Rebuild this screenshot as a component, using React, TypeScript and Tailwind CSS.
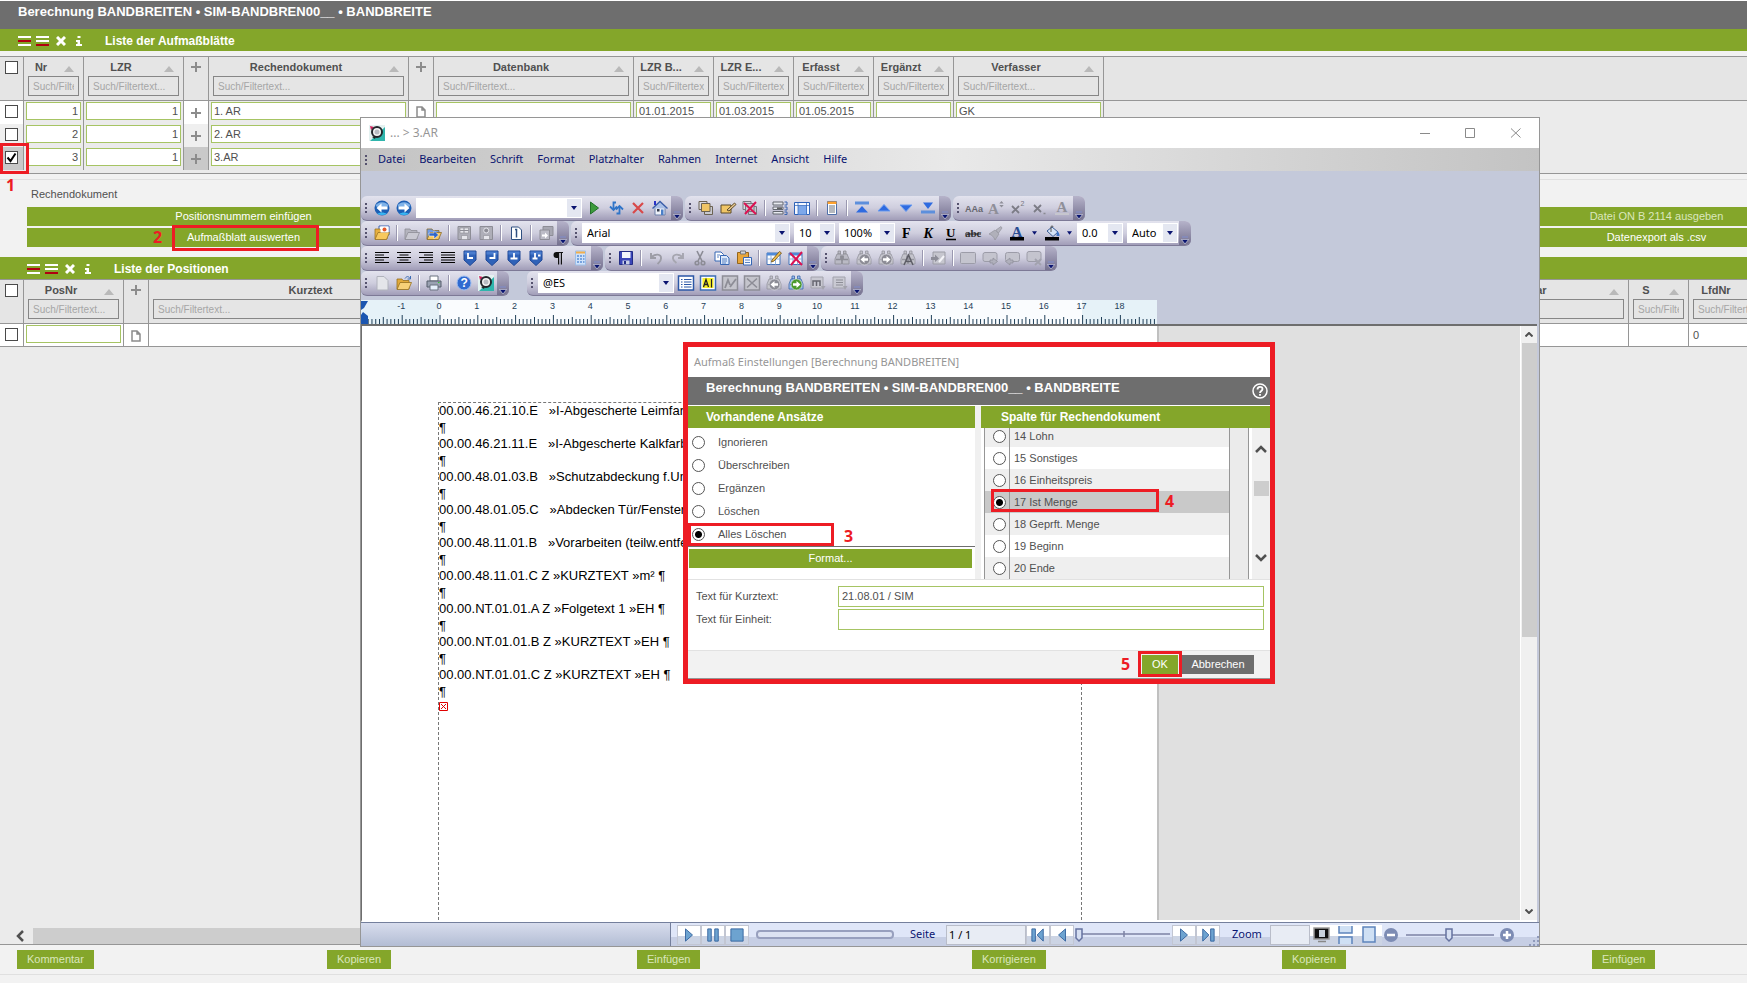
import React, { useState } from "react";

const ui_font = "font-['Noto_Sans','Open_Sans',sans-serif]";

const gray = "#8f8f99";
const gray_light = "#c6c6ce";

const binoculars = (color: string, light: string) => (
  <g stroke={color} strokeWidth="0.8" fill={light}>
    <path d="M4 1h2.500v3H4zM9.500 1H12v3H9.500z" />
    <path d="M3 4h4l.5 4v6H1V9zM9 4h4l2 5v5H8.500V8z" />
    <path d="M6.500 6h3v4h-3z" fill={color} />
    <path d="M2 9.500h4M10 9.500h4" stroke={color} strokeWidth="1.500" />
  </g>
);

const shield = (inner: string) => (
  <>
    <path d="M2 1h12v9l-6 5.500L2 10z" fill="#2f62b8" stroke="#1f4796" />
    <path d="M2.500 1.500h11v3h-11z" fill="#4a7cce" />
    <path d={inner} stroke="#fff" strokeWidth="1.800" fill="none" />
  </>
);

const folder = (front: string, back: string, edge: string) => (
  <>
    <path d="M1 14V4h5l1 1.500h6V14z" fill={back} stroke={edge} strokeWidth="0.8" />
    <path d="M1 14.500l3-7h11.500l-3 7z" fill={front} stroke={edge} strokeWidth="0.8" />
  </>
);

const sheets = (color: string, edge: string) => (
  <>
    <path d="M1 1.500h8v8H1z" fill="#d8d8e0" stroke={edge} />
    <path d="M6.500 6.500h8v8h-8z" fill="#c8c8d0" stroke={edge} />
    <path d="M3.500 3.500h8.500v8H3.500z" fill={color} stroke={edge} />
  </>
);

const circle_arrow = (d: string, fill: string) => (
  <>
    <circle cx="8.500" cy="9.500" r="5.500" fill={fill} stroke="#e8e8ee" strokeWidth="0.6" />
    <path d={d} fill="#fff" />
  </>
);

const left_head = "M4.500 9.500L8.500 6v2.200H12v2.600H8.500V13z";
const right_head = "M12.500 9.500L8.500 6v2.200H5v2.600h3.500V13z";

const logo = (
  <>
    <path d="M0 0h16v16H0z" fill="#e4f2f1" />
    <path d="M16 2v14H1z" fill="#2fb5ac" />
    <path d="M1 1l4 1-3 3z" fill="#d21f5b" />
    <circle cx="8" cy="7" r="5" fill="#f4f4f4" stroke="#23262b" strokeWidth="2" />
    <circle cx="8" cy="7" r="2.500" fill="#b9bcc2" />
    <path d="M3 12l4-1-1 3z" fill="#222" />
  </>
);

const icons: Record<string, React.ReactNode> = {
  back: (
    <>
      <circle cx="8" cy="8" r="7.500" fill="#1d5fb4" />
      <path d="M1.500 6a7 6 0 0 1 13 0c-4 2-9 2-13 0z" fill="#7fb2e8" />
      <path d="M3 14a8 4 0 0 0 10 0c-3-2-7-2-10 0z" fill="#38b6f2" />
      <path d="M2.500 8l5-4.500v3h6v3h-6v3z" fill="#fff" />
    </>
  ),
  forward: (
    <>
      <circle cx="8" cy="8" r="7.500" fill="#1d5fb4" />
      <path d="M1.500 6a7 6 0 0 1 13 0c-4 2-9 2-13 0z" fill="#7fb2e8" />
      <path d="M3 14a8 4 0 0 0 10 0c-3-2-7-2-10 0z" fill="#38b6f2" />
      <path d="M13.500 8l-5-4.500v3h-6v3h6v3z" fill="#fff" />
    </>
  ),
  play: <path d="M4.500 2l8 6-8 6z" fill="#3c9a3c" stroke="#23702a" />,
  refresh: (
    <g fill="none" stroke="#2f74c8" strokeWidth="1.800">
      <path d="M8 2.500H5.500v7" />
      <path d="M2 6.500l3.500 3.500L9 6.500" />
      <path d="M8.500 13.500h3v-7" />
      <path d="M8 9.500L11.500 6 15 9.500" />
    </g>
  ),
  stop: <path d="M3 3l10 10M13 3L3 13" stroke="#d8494a" strokeWidth="2.200" />,
  home: (
    <>
      <path d="M3 7h10v8H3z" fill="#eef1f8" stroke="#6a7fa8" />
      <path d="M0.500 8.500L8 1.500l7.500 7" fill="#a9bfe6" stroke="#3b5ea8" strokeWidth="1.400" />
      <path d="M2 1h2v4H2z" fill="#2a33c8" />
      <path d="M5 9h2.500v2.500H5z" fill="#333a4a" />
      <path d="M9 9.500h2.500V15H9z" fill="#4a7fc8" />
    </>
  ),
  layers: sheets("#f0c566", "#6b6252"),
  layer_edit: (
    <>
      <path d="M1 5h10v8H1z" fill="#f0c566" stroke="#5c4b28" />
      <path d="M7 10l7.500-7 1.500 1.500L9 11z" fill="#e8c890" stroke="#5c4b28" />
    </>
  ),
  layer_delete: (
    <>
      {sheets("#c9c9d2", "#77777f")}
      <path d="M2 3l12 11M14 2L3 14" stroke="#dc1252" strokeWidth="2" />
    </>
  ),
  fields: (
    <>
      <path d="M1 2h10v3H1zM1 7h10v2.500H1zM1 11.500h10V14H1z" fill="#e8eaf0" stroke="#62666e" />
      <path d="M5 8.200h5" stroke="#222" />
      <path d="M12.500 2H15v3h-2.500M12.500 7H15v3h-2.500M12.500 12H15v2.500h-2.500" fill="none" stroke="#3a65b0" />
    </>
  ),
  frame: (
    <>
      <path d="M0.500 2.500h15v12h-15z" fill="#f4f8ff" stroke="#2d62b8" />
      <path d="M4 5.500h9v9H4z" fill="#7da8ea" />
      <path d="M0.500 5.500h15M4 2v12.500M12.500 2v12.500" stroke="#2d62b8" strokeWidth="0.7" />
    </>
  ),
  report: (
    <>
      <path d="M3.500 1.500h9v13h-9z" fill="#fff" stroke="#4f6fa8" />
      <path d="M3.500 1.500h9v2.500h-9z" fill="#ffa22e" />
      <path d="M5 6h6M5 8h6M5 10h6M5 12h6" stroke="#6a727f" />
    </>
  ),
  to_top: (
    <>
      <path d="M1 1.500h14v3H1z" fill="#5d8fdc" />
      <path d="M8 6l6 6.500H2z" fill="#2f6be0" />
    </>
  ),
  up: <path d="M8 4.500l6 6.500H2z" fill="#2f6be0" stroke="#6a9cf0" />,
  down: <path d="M8 11.500L2 5h12z" fill="#2f6be0" stroke="#6a9cf0" />,
  to_bottom: (
    <>
      <path d="M8 9L3 2.500h10z" fill="#2f6be0" />
      <path d="M1 10.500h14v3H1z" fill="#5d8fdc" />
    </>
  ),
  char_size: (
    <text x="-1" y="12" fontSize="9" fontWeight="700" fontFamily="Liberation Sans" fill="#66666e">
      AAa
    </text>
  ),
  font_grow: (
    <>
      <text x="0" y="14" fontSize="15" fontWeight="700" fontFamily="Liberation Serif" fill={gray}>
        A
      </text>
      <path d="M13.500 1l2.200 2.500h-4.400zM13.500 7.500l2.200-2.500h-4.400z" fill={gray} />
    </>
  ),
  superscript: (
    <>
      <path d="M2 6l7 7M9 6l-7 7" stroke="#7c7c86" strokeWidth="1.800" />
      <text x="10.500" y="6" fontSize="7" fontFamily="Liberation Sans" fill="#77777f">
        2
      </text>
    </>
  ),
  subscript: (
    <>
      <path d="M2 5l7 7M9 5l-7 7" stroke="#7c7c86" strokeWidth="1.800" />
      <path d="M11.500 13.500h2" stroke="#8a8a92" strokeWidth="1.500" />
    </>
  ),
  font_color_off: (
    <>
      <text x="2.500" y="12" fontSize="15" fontWeight="700" fontFamily="Liberation Serif" fill={gray}>
        A
      </text>
      <path d="M1 13h14v2H1z" fill={gray_light} />
    </>
  ),
  open_image: (
    <>
      <path d="M5 1h10v9H5z" fill="#fff" stroke="#3d63b4" />
      {folder("#f7c85e", "#e8b040", "#9a7424")}
      <path d="M6.500 1.500h8v6h-8z" fill="#fff" />
      <circle cx="10.500" cy="4.500" r="2" fill="#e4572a" />
    </>
  ),
  folder_off: folder("#c9c9d2", "#b4b4be", "#8d8d96"),
  folder_go: (
    <>
      {folder("#f7c85e", "#6f9be6", "#8a6c2c")}
      <path d="M3 8h5V5.500L12.500 10 8 14v-3H3z" fill="#2f66c8" stroke="#fff" strokeWidth="0.5" />
    </>
  ),
  save_grid_off: (
    <>
      <path d="M2 1.500h12.500v13H2z" fill="#aeaeb8" stroke="#8d8d96" />
      <path d="M4 3h8.500v5H4zM5.500 10.500h6v4h-6z" fill="#e6e6ec" stroke="#8d8d96" strokeWidth="0.6" />
      <path d="M8 3v5M4 5.500h8.500" stroke="#8d8d96" />
    </>
  ),
  save_img_off: (
    <>
      <path d="M2 1.500h12.500v13H2z" fill="#aeaeb8" stroke="#8d8d96" />
      <path d="M5.500 10.500h6v4h-6z" fill="#e6e6ec" stroke="#8d8d96" strokeWidth="0.6" />
      <circle cx="8.200" cy="5.500" r="2.500" fill="#8d8d96" stroke="#e6e6ec" />
    </>
  ),
  page_split: (
    <>
      <path d="M3.500 2h7l3 3v9.500h-10z" fill="#fff" stroke="#2f4f80" />
      <path d="M7 4.500h1.500v8" fill="none" stroke="#2f4f80" strokeWidth="1.500" />
    </>
  ),
  export_off: (
    <>
      <path d="M5 1.500h10v9H5z" fill="#a7a7b2" stroke="#8d8d96" />
      <path d="M2 5h9.500v9.500H2z" fill="#bcbcc6" stroke="#8d8d96" />
      <path d="M4 9.500h3v-2l3 3-3 3v-2H4z" fill="#fff" />
    </>
  ),
  bold: (
    <text x="3" y="13" fontSize="14" fontWeight="700" fontFamily="Liberation Serif" fill="#000">
      F
    </text>
  ),
  italic: (
    <text x="2.500" y="13" fontSize="14" fontWeight="700" fontStyle="italic" fontFamily="Liberation Serif" fill="#000">
      K
    </text>
  ),
  underline: (
    <>
      <text x="3" y="12" fontSize="13" fontWeight="700" fontFamily="Liberation Serif" fill="#000">
        U
      </text>
      <path d="M3 14.500h10" stroke="#000" strokeWidth="1.300" />
    </>
  ),
  strike: (
    <>
      <text x="0" y="12" fontSize="11" fontWeight="700" fontFamily="Liberation Serif" fill="#333">
        abc
      </text>
      <path d="M0 9h16" stroke="#222" />
    </>
  ),
  brush: (
    <>
      <path d="M9 5l5-3.500 1 1.500-3.500 5z" fill="#b4b4be" stroke="#8d8d96" strokeWidth="0.6" />
      <path d="M2 9l6-4 4 4-4 6c-1-3-3-5-6-6z" fill="#b0b0ba" stroke="#8d8d96" strokeWidth="0.6" />
    </>
  ),
  font_color: (
    <>
      <text x="2.500" y="11.500" fontSize="15" fontWeight="700" fontFamily="Liberation Serif" fill="#2a4d92">
        A
      </text>
      <path d="M1 12h14v3.500H1z" fill="#000" />
    </>
  ),
  fill_color: (
    <>
      <path d="M3 6l5-4 6 5-5 4.500z" fill="#d5e2f5" stroke="#3b5d94" />
      <path d="M7 7V2c0-1.500 2-1.500 2 0" fill="none" stroke="#555" />
      <path d="M13 6c2 1 2.500 3 2.500 5h-3z" fill="#3f73c4" />
      <path d="M1 12h14v3.500H1z" fill="#000" />
    </>
  ),
  align_left: <path d="M1 2.500h14M1 5h9M1 7.500h14M1 10h9M1 12.500h14" stroke="#000" strokeWidth="1.200" />,
  align_center: <path d="M1 2.500h14M3.500 5h9M1 7.500h14M3.500 10h9M1 12.500h14" stroke="#000" strokeWidth="1.200" />,
  align_right: <path d="M1 2.500h14M6 5h9M1 7.500h14M6 10h9M1 12.500h14" stroke="#000" strokeWidth="1.200" />,
  align_full: <path d="M1 2.500h14M1 5h14M1 7.500h14M1 10h14M1 12.500h14" stroke="#000" strokeWidth="1.200" />,
  tab_left: shield("M6 3v5h5"),
  tab_right: shield("M10.500 3v5h-5"),
  tab_center: shield("M8 3v5.500M4.500 8.500h7"),
  tab_decimal: shield("M7 3v5.500M4.500 8.500h5M10 5.500h2.500"),
  pilcrow: (
    <>
      <path d="M9 2H6.500a3 3 0 0 0 0 6H8v6.500h1.200V3h1.600v11.500H12V3h1V2z" fill="#111" />
    </>
  ),
  calc: (
    <>
      <path d="M3.500 1h10v14h-10z" fill="#cfe2fa" stroke="#9cbfe8" />
      <path d="M4 1.500h9v2H4z" fill="#f3ae4a" />
      <path d="M5 6h2M8 6h2M11 6h1.500M5 9h2M8 9h2M11 9h1.500M5 12h2M8 12h2M11 12h1.500" stroke="#5b8fd6" strokeWidth="1.600" />
    </>
  ),
  save: (
    <>
      <path d="M1.500 1.500h13v13h-13z" fill="#3a45b8" stroke="#232c86" />
      <path d="M4 2h8.500v6H4z" fill="#f2f5fc" />
      <path d="M4.500 10.500h7v4h-7z" fill="#c9d1e6" />
      <path d="M6 11h2v3H6z" fill="#232c86" />
    </>
  ),
  undo: <path d="M3 3v5h5M3.500 7.500c3-4 10-4 9.500 1 0 3-2 4-3.500 5.500" fill="none" stroke="#9c9ca6" strokeWidth="1.900" />,
  redo: <path d="M13 3v5H8M12.500 7.500c-3-4-10-4-9.500 1 0 2 1.500 3 3.500 4.500" fill="none" stroke="#a6a6b0" strokeWidth="1.900" />,
  cut: (
    <g stroke="#8c8c96" fill="none" strokeWidth="1.600">
      <path d="M5 1l5 10M11 1L6 11" />
      <circle cx="5" cy="13" r="1.800" />
      <circle cx="11" cy="13" r="1.800" />
    </g>
  ),
  copy: (
    <>
      <path d="M1 2h6l2.500 2.500V11H1z" fill="#fff" stroke="#3566b4" />
      <path d="M6.500 5.500h6L15 8v6.500H6.500z" fill="#dce9fb" stroke="#3566b4" />
      <path d="M8 9h5M8 11h5M8 13h4M3 5h3M3 7h2" stroke="#3566b4" strokeWidth="0.8" />
    </>
  ),
  paste: (
    <>
      <path d="M1.500 2.500h11v11h-11z" fill="#e8a63a" stroke="#94651d" />
      <path d="M4.500 1h5v3h-5z" fill="#d3d6dc" stroke="#777" />
      <path d="M7.500 7.500h8V15h-8z" fill="#f5f8fe" stroke="#3566b4" />
      <path d="M9 10h5M9 12.500h5" stroke="#3566b4" strokeWidth="0.8" />
    </>
  ),
  table_edit: (
    <>
      <path d="M1 3h13v11.500H1z" fill="#fff" stroke="#4372b8" />
      <path d="M1 3h13v2.500H1z" fill="#4f8ad8" />
      <path d="M1 9h13M5 5v9.500M9.500 5v9.500" stroke="#8fb0de" />
      <path d="M6 10l7.500-8.500L15.500 3 8 11l-2.500 1z" fill="#f0c050" stroke="#6b4a12" strokeWidth="0.8" />
    </>
  ),
  table_delete: (
    <>
      <path d="M1 3h13v11.500H1z" fill="#fff" stroke="#4372b8" />
      <path d="M1 3h13v2.500H1z" fill="#4f8ad8" />
      <path d="M1 9h13M5 5v9.500M9.500 5v9.500" stroke="#8fb0de" />
      <path d="M2 3l12 12M14 2L3 15" stroke="#dc1252" strokeWidth="2" />
    </>
  ),
  find: binoculars("#8d8d96", "#babac4"),
  find_prev: (
    <>
      {binoculars("#9696a0", "#c4c4cc")}
      {circle_arrow(left_head, "#8d8d96")}
    </>
  ),
  find_next: (
    <>
      {binoculars("#9696a0", "#c4c4cc")}
      {circle_arrow(right_head, "#8d8d96")}
    </>
  ),
  find_next_on: (
    <>
      {binoculars("#3b68a8", "#9dc0ee")}
      {circle_arrow(right_head, "#4b9a2c")}
    </>
  ),
  find_text: (
    <>
      {binoculars("#9696a0", "#c4c4cc")}
      <path d="M4 15l4.500-10L13 15M5.500 11.500h6" stroke="#5d5d66" strokeWidth="1.500" fill="none" />
    </>
  ),
  note_go: (
    <>
      <path d="M3 2h12v12H3z" fill="#c6c6ce" stroke="#9c9ca6" />
      <path d="M1 7h4V4.500L9 8.500 5 12V10H1z" fill="#8d8d98" />
      <path d="M9 12l5-6" stroke="#f4f4f8" strokeWidth="2" />
    </>
  ),
  box: <rect x="0.500" y="2.500" width="15" height="11" rx="1" fill="#c4c4ce" stroke="#9c9ca8" />,
  box_next: (
    <>
      <rect x="1" y="2.500" width="14" height="9" rx="2" fill="#c4c4ce" stroke="#9c9ca8" />
      <path d="M8 10h3V8l4.500 3.500L11 15v-2H8z" fill="#b0b0bc" stroke="#8d8d98" strokeWidth="0.7" />
    </>
  ),
  box_prev: (
    <>
      <rect x="1.500" y="2.500" width="14" height="9" rx="2" fill="#c4c4ce" stroke="#9c9ca8" />
      <path d="M9 10H6V8l-4.500 3.500L6 15v-2h3z" fill="#b0b0bc" stroke="#8d8d98" strokeWidth="0.7" />
    </>
  ),
  box_delete: (
    <>
      <rect x="1" y="1.500" width="14" height="10" rx="2" fill="#c4c4ce" stroke="#9c9ca8" />
      <path d="M9 9l6 6M15 9l-6 6" stroke="#a2a2ae" strokeWidth="1.800" />
    </>
  ),
  new_page: <path d="M3 1.500h7l4 4v9.500H3z" fill="#e4e5ea" stroke="#b0b2bc" />,
  open: (
    <>
      {folder("#f7d078", "#e2a93a", "#94701f")}
      <path d="M9 3.500c2-3 4-2 5 0M14.500 1v3h-3" stroke="#3c6cb4" fill="none" />
    </>
  ),
  print: (
    <>
      <path d="M4 1h8v5H4z" fill="#fff" stroke="#6b7280" />
      <path d="M1 6h14v6H1z" fill="#9aa2b2" stroke="#555c6b" />
      <path d="M4 10h8v5H4z" fill="#e6f0fb" stroke="#6b7280" />
      <path d="M12 7.500h1.500" stroke="#3c3" />
    </>
  ),
  help: (
    <>
      <circle cx="8" cy="8" r="7" fill="#2f6ad0" stroke="#9dbdf0" />
      <text x="4.500" y="12.300" fontSize="12" fontWeight="700" fontFamily="Liberation Sans" fill="#fff">
        ?
      </text>
    </>
  ),
  logo: logo,
  list: (
    <>
      <path d="M0.500 1h15v14h-15z" fill="#fff" stroke="#2b57a6" strokeWidth="1.500" />
      <path d="M3 4.500h1.500M3 7h1.500M3 9.500h1.500M3 12h1.500M6 4.500h7.500M6 7h7.500M6 9.500h7.500M6 12h7.500" stroke="#2b57a6" />
    </>
  ),
  text_mark: (
    <>
      <path d="M0.500 1h15v14h-15z" fill="#fff" stroke="#3d6db4" strokeWidth="1.500" />
      <path d="M2.500 3h11v10h-11z" fill="#f6f02a" />
      <path d="M3.500 12l2.500-7.500L8.500 12M4.500 9.500h3" fill="none" stroke="#222" strokeWidth="1.300" />
      <path d="M11.500 4v8.500" stroke="#222" strokeWidth="1.200" />
    </>
  ),
  mark_edit_off: (
    <>
      <path d="M0.500 1h15v14h-15z" fill="#c4c4cc" stroke="#8d8d96" strokeWidth="1.500" />
      <path d="M3 13l3-8 2 5M8 12l6-8" fill="none" stroke="#8d8d96" strokeWidth="1.800" />
    </>
  ),
  mark_delete_off: (
    <>
      <path d="M0.500 1h15v14h-15z" fill="#c4c4cc" stroke="#8d8d96" strokeWidth="1.500" />
      <path d="M3 3.500l10 9M13 3.500l-10 9" stroke="#8d8d96" strokeWidth="1.600" />
    </>
  ),
  macro_off: (
    <>
      <path d="M1 2h12v11H1z" fill="#c9c9d2" stroke="#a2a2ac" />
      <path d="M3 11V6h7v5M6.500 6v5" fill="none" stroke="#666670" strokeWidth="1.500" />
      <path d="M11 11h4.500L13 15z" fill="#a2a2ac" />
    </>
  ),
  list_off: (
    <>
      <path d="M1 2h12v11H1z" fill="#c9c9d2" stroke="#a2a2ac" />
      <path d="M4 5h7M4 7.500h7M4 10h7" stroke="#8d8d96" />
      <path d="M11 11h4.500L13 15z" fill="#a2a2ac" />
    </>
  ),
};

const Icon = ({ name }: { name: string }) => (
  <button type="button" aria-label={name} className="flex h-6 w-[22px] items-center justify-center">
    <svg viewBox="0 0 16 16" className="h-4 w-4 overflow-visible">
      {icons[name]}
    </svg>
  </button>
);

const Sep = () => (
  <span className="flex w-2 justify-center">
    <span className="h-4 w-[2px] border-r border-white bg-[#9a98b0]" />
  </span>
);

// "|" in a list of names stands for a separator
const IconList = ({ names }: { names: string }) => (
  <>
    {names.split(" ").map((n, i) => (n === "|" ? <Sep key={i} /> : <Icon key={i} name={n} />))}
  </>
);

const Bar = ({ children }: { children: React.ReactNode }) => (
  <div className="flex h-[25px] items-center overflow-hidden rounded-md border-b border-[#7d7996] bg-linear-to-b from-[#e3e3ee] via-[#cfcede] to-[#a19db8]">
    <span className="flex w-[10px] flex-col items-center gap-[2px]">
      <i className="h-[2px] w-[2px] bg-[#55526e]" />
      <i className="h-[2px] w-[2px] bg-[#55526e]" />
      <i className="h-[2px] w-[2px] bg-[#55526e]" />
    </span>
    {children}
    <span className="flex h-full w-3 items-end justify-center bg-linear-to-b from-[#b6b3ca] to-[#75718f] pb-px">
      <svg viewBox="0 0 8 8" className="h-2 w-2">
        <path d="M1 1h6" stroke="#fff" strokeWidth="2" />
        <path d="M1 1h6" stroke="#0a1470" strokeWidth="1" />
        <path d="M0.500 3.500h7L4 8z" fill="#0a1470" stroke="#fff" strokeWidth="0.5" />
      </svg>
    </span>
  </div>
);

const Combo = ({ label, value, width }: { label: string; value: string; width: string }) => (
  <span className={`relative mx-px flex h-5 bg-white ${width}`}>
    <select
      aria-label={label}
      className={`h-5 w-full appearance-none bg-transparent pl-[5px] text-[11px] leading-5 text-black outline-none ${ui_font}`}
    >
      <option>{value}</option>
    </select>
    <span className="pointer-events-none absolute inset-y-px right-px flex w-[14px] items-center justify-center bg-[#e4e7f1]">
      <svg viewBox="0 0 6 4" className="h-1 w-[6px]">
        <path d="M0 0h6L3 4z" fill="#0a1470" />
      </svg>
    </span>
  </span>
);

const Arrow = () => (
  <svg viewBox="0 0 6 4" className="mx-1 h-1 w-[5px]">
    <path d="M0 0h6L3 4z" fill="#0a1470" />
  </svg>
);

const Check = ({ label, checked = false }: { label: string; checked?: boolean }) => {
  const [on, set_on] = useState<boolean>(checked);
  return (
    <span className="relative ml-[5px] block h-[13px] w-[13px]">
      <input
        type="checkbox"
        aria-label={label}
        checked={on}
        onChange={() => set_on(!on)}
        className="block h-[13px] w-[13px] appearance-none border border-[#4a4a4a] bg-white"
      />
      {on ? (
        <svg viewBox="0 0 13 13" className="pointer-events-none absolute inset-0">
          <path d="M2.500 6.500l3 3.500 5-7.500" fill="none" stroke="#000" strokeWidth="2" />
        </svg>
      ) : (
        ""
      )}
    </span>
  );
};

const Plus = () => (
  <svg viewBox="0 0 10 10" className="mx-auto h-[10px] w-[10px]">
    <path d="M5 0v10M0 5h10" stroke="#8c8c8c" strokeWidth="2" />
  </svg>
);

const Page = () => (
  <svg viewBox="0 0 10 12" className="mx-auto h-3 w-[10px]">
    <path d="M1 1h5l3 3v7H1zM6 1v3h3" fill="none" stroke="#8c8c8c" strokeWidth="1.500" />
  </svg>
);

const head_cell = "h-11 border-r border-b border-[#969696] p-0 align-top";
const body_cell = "h-[23px] border-r border-[#969696] p-0 align-top";

const HeadCheck = () => (
  <th className={head_cell}>
    <div className="pt-1">
      <Check label="Alle auswählen" />
    </div>
  </th>
);

const HeadPlus = () => (
  <th className={head_cell}>
    <div className="pt-[5px]">
      <Plus />
    </div>
  </th>
);

const HeadFilter = ({ title }: { title: string }) => (
  <th className={head_cell}>
    <div className="flex h-[19px] items-center pt-[2px]">
      <span className="flex-1 text-center whitespace-nowrap">{title}</span>
      <svg viewBox="0 0 10 6" className="mr-[9px] ml-[6px] mt-[2px] h-[6px] w-[10px]">
        <path d="M5 0l5 6H0z" fill="#b9b9b9" />
      </svg>
    </div>
    <div className="flex px-1">
      <input
        placeholder="Such/Filtertext..."
        aria-label={`Filter ${title}`}
        className="h-5 w-full min-w-0 border border-[#868686] bg-transparent px-1 text-[10px] font-normal outline-none placeholder:text-[#a6a6a6]"
      />
    </div>
  </th>
);

const Field = ({ label, value, right = false }: { label: string; value: string; right?: boolean }) => (
  <td className={body_cell}>
    <div className="flex px-[2px] pt-px">
      <input
        aria-label={label}
        defaultValue={value}
        className={`h-[18px] w-full min-w-0 border border-[#a6c463] bg-white px-[2px] text-[11px] outline-none ${right ? "text-right" : ""}`}
      />
    </div>
  </td>
);

const SectionBar = ({ title, indent }: { title: string; indent: string }) => (
  <div className={`flex h-[22px] items-center gap-[6px] bg-[#84a62a] pt-px text-white ${indent}`}>
    <svg viewBox="0 0 32 10" className="h-[10px] w-8">
      <path d="M0 1h13M0 9h13M18 1h13M18 5h13" stroke="#fff" strokeWidth="2" />
      <path d="M0 5h13M18 9h13" stroke="#b00010" strokeWidth="2" />
    </svg>
    <svg viewBox="0 0 10 10" className="h-[10px] w-[10px]">
      <path d="M1 1l8 8M9 1L1 9" stroke="#fff" strokeWidth="3" />
    </svg>
    <svg viewBox="0 0 6 10" className="ml-[4px] h-[10px] w-[6px]">
      <path d="M1.500 0h3v2h-3zM0 4h4v4h2v2H0V8h1.500V6H0z" fill="#fff" />
    </svg>
    <h2 className="ml-[17px] text-xs font-bold">{title}</h2>
  </div>
);

const GreenButton = ({ children, className = "" }: { children: React.ReactNode; className?: string }) => (
  <button type="button" className={`h-[19px] bg-[#84a62a] text-[11px] leading-[19px] ${className}`}>
    {children}
  </button>
);

const rows = [
  { nr: "1", name: "1. AR", dates: ["01.01.2015", "01.03.2015", "01.05.2015", ""], author: "GK", bg: "bg-white" },
  { nr: "2", name: "2. AR", dates: ["", "", "", ""], author: "", bg: "bg-[#efefef]" },
  { nr: "3", name: "3.AR", dates: ["", "", "", ""], author: "", bg: "bg-[#c9c9c9]" },
];

const date_names = ["LZR B...", "LZR E...", "Erfasst", "Ergänzt"];

const SheetTable = () => (
  <div className="mt-[5px] border-y border-[#969696] bg-[#ebebeb] pb-[3px]">
    <table className="w-full table-fixed border-separate border-spacing-0">
      <colgroup>
        <col className="w-6" />
        <col className="w-[60px]" />
        <col className="w-[100px]" />
        <col className="w-[25px]" />
        <col className="w-[200px]" />
        <col className="w-[25px]" />
        <col className="w-[200px]" />
        <col className="w-[80px]" />
        <col className="w-[80px]" />
        <col className="w-[80px]" />
        <col className="w-[80px]" />
        <col className="w-[150px]" />
        <col />
      </colgroup>
      <thead>
        <tr className="bg-[#e5e5e5]">
          <HeadCheck />
          <HeadFilter title="Nr" />
          <HeadFilter title="LZR" />
          <HeadPlus />
          <HeadFilter title="Rechendokument" />
          <HeadPlus />
          <HeadFilter title="Datenbank" />
          {date_names.map((d) => (
            <HeadFilter key={d} title={d} />
          ))}
          <HeadFilter title="Verfasser" />
          <td className="border-b border-[#969696]" />
        </tr>
      </thead>
      <tbody>
        {rows.map((r) => (
          <tr key={r.nr}>
            <td className={`${body_cell} ${r.bg}`}>
              <div className="pt-1">
                <Check label={`Zeile ${r.nr}`} checked={r.nr === "3"} />
              </div>
            </td>
            <Field label="Nr" value={r.nr} right />
            <Field label="LZR" value="1" right />
            <td className={`${body_cell} ${r.bg}`}>
              <div className="pt-[7px]">
                <Plus />
              </div>
            </td>
            <Field label="Rechendokument" value={r.name} />
            <td className={`${body_cell} ${r.bg}`}>
              <div className="pt-[5px]">
                <Page />
              </div>
            </td>
            <Field label="Datenbank" value="" />
            {r.dates.map((d, i) => (
              <Field key={i} label={date_names[i]} value={d} />
            ))}
            <Field label="Verfasser" value={r.author} />
            <td />
          </tr>
        ))}
      </tbody>
    </table>
  </div>
);

const PositionTable = () => (
  <div className="flex-1 overflow-hidden border-t border-[#969696] bg-[#ebebeb]">
    <table className="w-[1769px] table-fixed border-separate border-spacing-0">
      <colgroup>
        <col className="w-6" />
        <col className="w-[100px]" />
        <col className="w-[25px]" />
        <col className="w-[349px]" />
        <col />
        <col className="w-[200px]" />
        <col className="w-[60px]" />
        <col className="w-[80px]" />
      </colgroup>
      <thead>
        <tr className="bg-[#e5e5e5]">
          <HeadCheck />
          <HeadFilter title="PosNr" />
          <HeadPlus />
          <HeadFilter title="Kurztext" />
          <td className={head_cell} />
          <HeadFilter title="Kommentar" />
          <HeadFilter title="S" />
          <HeadFilter title="LfdNr" />
        </tr>
      </thead>
      <tbody>
        <tr className="bg-white">
          <td className={`${body_cell} border-b`}>
            <div className="pt-1">
              <Check label="Position" />
            </div>
          </td>
          <td className={`${body_cell} border-b`}>
            <div className="flex px-[2px] pt-px">
              <input aria-label="PosNr" className="h-[18px] w-full min-w-0 border border-[#a6c463] bg-white outline-none" />
            </div>
          </td>
          <td className={`${body_cell} border-b`}>
            <div className="pt-[6px]">
              <Page />
            </div>
          </td>
          <td className={`${body_cell} border-b`} />
          <td className={`${body_cell} border-b`} />
          <td className={`${body_cell} border-b`} />
          <td className={`${body_cell} border-b`} />
          <td className={`${body_cell} border-b`}>
            <div className="pt-[3px] pl-1">0</div>
          </td>
        </tr>
      </tbody>
    </table>
  </div>
);

const menu = ["Datei", "Bearbeiten", "Schrift", "Format", "Platzhalter", "Rahmen", "Internet", "Ansicht", "Hilfe"];

const unit = 37.8;

const Ruler = () => {
  const ticks = [];
  for (let i = -20; i < 190; i++) {
    const h = i % 10 === 0 ? 9 : i % 5 === 0 ? 7 : 5;
    ticks.push(<path key={i} d={`M${79 + (i * unit) / 10} 24v-${h}`} stroke="#1f3f58" />);
  }
  const labels = [];
  for (let n = -1; n <= 18; n++) {
    labels.push(
      <text key={n} x={78 + n * unit} y="9" textAnchor="middle" fontSize="9" fill="#1f3f58" fontFamily="Liberation Sans">
        {n}
      </text>
    );
  }
  return (
    <svg viewBox="0 0 796 24" className="mt-1 h-6 w-[796px] shrink-0">
      <path d="M0 0h796v24H0z" fill="#e6f2f8" />
      <path d="M78 0h643v24H78z" fill="#fafcfe" />
      {ticks}
      {labels}
      <path d="M0 1h7L3 8 0 10zM0 24V15l2-3 5 4v8z" fill="#1b55b0" />
    </svg>
  );
};

const doc_lines = [
  "00.00.46.21.10.E   »I-Abgescherte Leimfarben",
  "00.00.46.21.11.E   »I-Abgescherte Kalkfarben",
  "00.00.48.01.03.B   »Schutzabdeckung f.Umbau",
  "00.00.48.01.05.C   »Abdecken Tür/Fenster",
  "00.00.48.11.01.B   »Vorarbeiten (teilw.entfernen)",
  "00.00.48.11.01.C Z »KURZTEXT »m² ¶",
  "00.00.NT.01.01.A Z »Folgetext 1 »EH ¶",
  "00.00.NT.01.01.B Z »KURZTEXT »EH ¶",
  "00.00.NT.01.01.C Z »KURZTEXT »EH ¶",
];

const status_shapes: Record<string, React.ReactNode> = {
  Start: <path d="M4 1l8 7-8 7z" />,
  Pause: <path d="M2 1h4v14H2zM10 1h4v14h-4z" />,
  Stopp: <path d="M1 1h14v14H1z" />,
  Erste: <path d="M1 1h4v14H1zM14 1v14L7 8z" />,
  Vorige: <path d="M12 1v14L4 8z" />,
  Weiter: <path d="M4 1l8 7-8 7z" />,
  Letzte: <path d="M2 1l7 7-7 7zM11 1h4v14h-4z" />,
};

const StatusButton = ({ name }: { name: string }) => (
  <button
    type="button"
    aria-label={name}
    className="flex h-5 w-6 items-center justify-center border border-[#c2c6d2] bg-linear-to-b from-white from-55% to-[#ccd4e4] to-55%"
  >
    <svg viewBox="0 0 16 16" className="h-[14px] w-4 fill-[#6da3d0] stroke-[#2f5f9c]">
      {status_shapes[name]}
    </svg>
  </button>
);

const StatusBar = () => (
  <div className="flex h-6 shrink-0 border-t border-[#747f9c] bg-linear-to-b from-[#dfe6f8] from-60% to-[#c6cee4] to-60% text-[#0a1470]">
    <div className="w-[310px] border-r border-[#747f9c] bg-linear-to-b from-[#d8dded] to-[#b3bdd4]" />
    <div className="flex flex-1 items-center pl-[6px] text-[11px]">
      <StatusButton name="Start" />
      <StatusButton name="Pause" />
      <StatusButton name="Stopp" />
      <span className="mr-4 ml-[7px] h-[9px] w-[138px] rounded-sm border-2 border-[#98a0be] bg-[#dde3f2]" />
      <label htmlFor="seite" className="w-9">
        Seite
      </label>
      <input id="seite" defaultValue="1 / 1" className="h-5 w-20 border border-[#b9bdc9] bg-[#e8ecf4] px-[2px] text-black outline-none" />
      <StatusButton name="Erste" />
      <StatusButton name="Vorige" />
      <svg viewBox="0 0 98 18" className="h-[18px] w-[98px]">
        <path d="M8 8h88M50 5v6" stroke="#7d82a4" strokeWidth="1.500" />
        <path d="M2 3h6v9l-3 3-3-3z" fill="#d6dff2" stroke="#6673a0" strokeWidth="1.500" />
      </svg>
      <StatusButton name="Weiter" />
      <StatusButton name="Letzte" />
      <label htmlFor="zoom" className="ml-3 w-[38px]">
        Zoom
      </label>
      <input id="zoom" className="h-5 w-10 border border-[#b9bdc9] bg-[#e8ecf4] outline-none" />
      <span className="flex h-5 items-center bg-linear-to-b from-white from-55% to-[#ccd4e4] to-55%">
        <svg viewBox="0 0 72 18" className="h-[18px] w-[72px]">
          <path d="M4 2h15v11H4z" fill="#111" stroke="#9a9a9a" strokeWidth="1.500" />
          <path d="M9 4h6v7H9z" fill="#c9d2dc" />
          <path d="M8 15.500h8" stroke="#888" strokeWidth="1.500" />
          <path d="M29 0v7h13V0M29 18v-7h13v7" fill="#cfe0f4" stroke="#5d84bc" strokeWidth="1.500" />
          <path d="M53 1h12v15H53z" fill="#cfe0f4" stroke="#5d84bc" strokeWidth="1.500" />
        </svg>
      </span>
      <svg viewBox="0 0 132 18" className="h-[18px] w-[132px]">
        <circle cx="9" cy="9" r="7" fill="#7d8cb4" />
        <path d="M5 9h8" stroke="#fff" strokeWidth="2.500" />
        <path d="M24 9h88" stroke="#7d82a4" strokeWidth="1.500" />
        <path d="M64 3h6v9l-3 3-3-3z" fill="#d6dff2" stroke="#6673a0" strokeWidth="1.500" />
        <circle cx="125" cy="9" r="7" fill="#7d8cb4" />
        <path d="M121 9h8M125 5v8" stroke="#fff" strokeWidth="2.500" />
      </svg>
      <svg viewBox="0 0 10 10" className="mt-3 ml-auto h-[10px] w-[10px] fill-[#8f9abb]">
        <path d="M8 0h2v2H8zM4 4h2v2H4zM8 4h2v2H8zM0 8h2v2H0zM4 8h2v2H4zM8 8h2v2H8z" />
      </svg>
    </div>
  </div>
);

const EditorWindow = () => (
  <section className={`absolute top-[117px] left-[360px] flex h-[830px] w-[1180px] flex-col border border-[#969696] bg-[#c4c9da] ${ui_font}`}>
    <header className="flex h-[30px] shrink-0 items-center bg-white pl-2 text-xs text-[#969696]">
      <svg viewBox="0 0 16 16" className="mr-[5px] h-4 w-4">
        {logo}
      </svg>
      ... &gt; 3.AR
      <svg viewBox="0 0 101 10" className="mr-[18px] ml-auto h-[10px] w-[101px]">
        <path d="M0 5.500h10M45.500 0.500h9v9h-9zM91 0.500l9.500 9M100.500 0.500l-9.500 9" fill="none" stroke="#8a8a8a" />
      </svg>
    </header>
    <nav className="flex h-[23px] shrink-0 items-center gap-[14px] bg-linear-to-r from-[#c3c3c3] via-[#e9e9e9] to-[#c3c3c3] text-[11px] text-[#0a1470]">
      <span className="-mr-[13px] flex w-4 flex-col gap-[2px] pl-1">
        <i className="h-[2px] w-[2px] bg-[#55526e]" />
        <i className="h-[2px] w-[2px] bg-[#55526e]" />
        <i className="h-[2px] w-[2px] bg-[#55526e]" />
      </span>
      {menu.map((m) => (
        <button key={m} type="button">
          {m}
        </button>
      ))}
    </nav>
    <div className="mt-[25px] flex flex-col">
      <div className="flex gap-[2px]">
        <Bar>
          <IconList names="back forward" />
          <Combo label="Adresse" value="" width="w-[166px]" />
          <IconList names="play refresh stop home" />
        </Bar>
        <Bar>
          <IconList names="layers layer_edit layer_delete | fields frame | report | to_top up down to_bottom" />
        </Bar>
        <Bar>
          <IconList names="char_size font_grow superscript subscript font_color_off" />
        </Bar>
      </div>
      <div className="flex gap-[2px]">
        <Bar>
          <IconList names="open_image | folder_off folder_go | save_grid_off save_img_off | page_split | export_off" />
        </Bar>
        <Bar>
          <div className="flex items-center gap-[2px]">
            <Combo label="Schriftart" value="Arial" width="w-[208px]" />
            <Combo label="Schriftgrad" value="10" width="w-[41px]" />
            <Combo label="Zoom" value="100%" width="w-[56px]" />
          </div>
          <IconList names="bold italic underline strike brush font_color" />
          <Arrow />
          <IconList names="fill_color" />
          <Arrow />
          <div className="flex items-center gap-[2px]">
            <Combo label="Abstand" value="0.0" width="w-[46px]" />
            <Combo label="Farbe" value="Auto" width="w-[51px]" />
          </div>
        </Bar>
      </div>
      <div className="flex gap-[2px]">
        <Bar>
          <IconList names="align_left align_center align_right align_full tab_left tab_right tab_center tab_decimal pilcrow calc" />
        </Bar>
        <Bar>
          <IconList names="save | undo redo cut copy paste | table_edit table_delete" />
        </Bar>
        <Bar>
          <IconList names="find find_prev find_next find_text | note_go | box box_next box_prev box_delete" />
        </Bar>
      </div>
      <div className="flex gap-[18px]">
        <Bar>
          <IconList names="new_page open | print | help logo" />
        </Bar>
        <Bar>
          <Combo label="Platzhalter" value="@ES" width="w-[136px]" />
          <IconList names="list text_mark mark_edit_off mark_delete_off find_prev find_next_on macro_off list_off" />
        </Bar>
      </div>
    </div>
    <Ruler />
    <div className="mr-[2px] flex min-h-0 flex-1 border-t-2 border-l border-[#6e6e6e] border-b-2 border-b-white bg-[#e0e0e0]">
      <article className="flex w-[797px] border-r-2 border-[#c0c0c0] bg-white pt-[76px] pl-[76px] font-['Liberation_Sans',sans-serif] text-[13px] text-black">
        <div className="w-[644px] overflow-hidden border-x border-t border-dashed border-[#777] whitespace-pre">
          {doc_lines.map((l) => (
            <div key={l}>
              <p className="h-4 leading-[15px]">{l}</p>
              <p className="h-[17px] leading-[17px]">¶</p>
            </div>
          ))}
          <svg viewBox="0 0 9 9" className="mt-[2px] h-[9px] w-[9px]">
            <path d="M0.500 0.500h8v8h-8zM2 2l5 5M7 2L2 7" fill="none" stroke="#e00000" />
          </svg>
        </div>
      </article>
      <div className="ml-auto flex w-[17px] flex-col items-center border-l border-white bg-[#f0f0f0]">
        <svg viewBox="0 0 8 5" className="mt-[6px] h-[5px] w-2">
          <path d="M0.500 4.500L4 1l3.500 3.500" fill="none" stroke="#505050" strokeWidth="2" />
        </svg>
        <span className="mt-[6px] h-[294px] w-[15px] bg-[#cdcdcd]" />
        <svg viewBox="0 0 8 5" className="mt-auto mb-[6px] h-[5px] w-2">
          <path d="M0.500 0.500L4 4 7.500 0.500" fill="none" stroke="#505050" strokeWidth="2" />
        </svg>
      </div>
    </div>
    <StatusBar />
  </section>
);

const radio_style =
  "h-[13px] w-[13px] shrink-0 appearance-none rounded-full border border-[#555] bg-white checked:bg-[radial-gradient(circle,#000_3px,#fff_4px)]";

const modes = ["Ignorieren", "Überschreiben", "Ergänzen", "Löschen", "Alles Löschen"];
const columns = ["14 Lohn", "15 Sonstiges", "16 Einheitspreis", "17 Ist Menge", "18 Geprft. Menge", "19 Beginn", "20 Ende"];

const SettingsDialog = () => {
  const [mode, set_mode] = useState<string>("Alles Löschen");
  const [column, set_column] = useState<string>("17 Ist Menge");

  return (
    <section className="absolute top-[342px] left-[683px] flex w-[592px] flex-col border-[5px] border-[#ed1c24] bg-white">
      <header className={`flex h-[30px] items-center pl-[6px] text-[11px] text-[#969696] ${ui_font}`}>
        Aufmaß Einstellungen [Berechnung BANDBREITEN]
      </header>
      <div className="flex h-7 items-center justify-between bg-[#6e6e6e] pr-[2px] pl-[18px] text-white">
        <h1 className="pb-[6px] text-[13px] font-bold">Berechnung BANDBREITEN • SIM-BANDBREN00__ • BANDBREITE</h1>
        <button type="button" aria-label="Hilfe">
          <svg viewBox="0 0 16 16" className="h-4 w-4">
            <circle cx="8" cy="8" r="7" fill="none" stroke="#fff" strokeWidth="1.500" />
            <path d="M5.500 6.500c0-3.500 5-3.500 5-.5 0 2-2.500 2-2.500 4M8 11v1.800" fill="none" stroke="#fff" strokeWidth="1.800" />
          </svg>
        </button>
      </div>
      <div className="flex h-[175px] gap-[6px] border-t border-b border-t-white border-b-[#e2e2e2] bg-[#f0f0f0]">
        <div className="flex w-[287px] flex-col bg-white">
          <h2 className="h-[22px] bg-[#84a62a] pl-[18px] text-xs leading-[22px] font-bold text-white">Vorhandene Ansätze</h2>
          <div className="flex flex-col border-b border-[#6e6e6e] pt-[3px]">
            {modes.map((m) => (
              <label key={m} className="flex h-[23px] items-center gap-[13px] pl-1">
                <input type="radio" name="mode" checked={mode === m} onChange={() => set_mode(m)} className={radio_style} />
                {m}
              </label>
            ))}
          </div>
          <GreenButton className="mt-[2px] mr-[3px] ml-px text-white">Format...</GreenButton>
        </div>
        <div className="flex min-w-0 flex-1 flex-col bg-white">
          <h2 className="h-[22px] shrink-0 bg-[#84a62a] pl-5 text-xs leading-[22px] font-bold text-white">Spalte für Rechendokument</h2>
          <div className="flex min-h-0 flex-1 pl-[3px]">
            <div className="flex w-[245px] flex-col justify-end overflow-hidden border-l border-[#969696]">
              {columns.map((c, i) => (
                <label
                  key={c}
                  className={`flex h-[22px] shrink-0 items-center pl-2 ${column === c ? "bg-[#c9c9c9]" : i % 2 ? "bg-white" : "bg-[#efefef]"}`}
                >
                  <input type="radio" name="column" checked={column === c} onChange={() => set_column(c)} className={radio_style} />
                  <span className="ml-[3px] flex h-[22px] items-center border-l border-[#969696] pl-1">{c}</span>
                </label>
              ))}
            </div>
            <div className="mr-[3px] w-5 border-x border-[#969696] bg-[#ebebeb]" />
            <div className="flex flex-1 flex-col items-center bg-[#f0f0f0]">
              <svg viewBox="0 0 12 8" className="mt-[17px] h-2 w-3">
                <path d="M1 7l5-5 5 5" fill="none" stroke="#505050" strokeWidth="2.500" />
              </svg>
              <span className="mt-[28px] h-[15px] w-[15px] bg-[#cdcdcd]" />
              <svg viewBox="0 0 12 8" className="mt-auto mb-[17px] h-2 w-3">
                <path d="M1 1l5 5 5-5" fill="none" stroke="#505050" strokeWidth="2.500" />
              </svg>
            </div>
          </div>
        </div>
      </div>
      <div className="grid grid-cols-[142px_1fr] gap-y-[2px] pt-[6px] pr-[6px] pb-5 pl-2">
        <label htmlFor="kurztext" className="leading-5">
          Text für Kurztext:
        </label>
        <input id="kurztext" defaultValue="21.08.01 / SIM" className="h-[21px] border border-[#a6c463] px-[3px] pb-[2px] outline-none" />
        <label htmlFor="einheit" className="leading-5">
          Text für Einheit:
        </label>
        <input id="einheit" className="h-[21px] border border-[#a6c463] px-[3px] outline-none" />
      </div>
      <footer className="flex h-[29px] items-center justify-end border-y border-t-[#e2e2e2] border-b-[#969696] bg-[#f2f2f2] pr-4 text-white">
        <GreenButton className="mr-1 w-9 text-white">OK</GreenButton>
        <button type="button" className="h-[19px] w-[72px] bg-[#6e6e6e] leading-[19px]">
          Abbrechen
        </button>
      </footer>
    </section>
  );
};

const marks = [
  { n: "1", box: "top-[143px] left-0 w-[29px] h-[31px]", num: "top-[175px] left-[6px]" },
  { n: "2", box: "top-[225px] left-[172px] w-[147px] h-[26px]", num: "top-[227px] left-[153px]" },
  { n: "3", box: "top-[523px] left-[688px] w-[146px] h-[23px]", num: "top-[526px] left-[844px]" },
  { n: "4", box: "top-[489px] left-[991px] w-[168px] h-[23px]", num: "top-[491px] left-[1165px]" },
  { n: "5", box: "top-[651px] left-[1138px] w-[44px] h-[26px]", num: "top-[654px] left-[1121px]" },
];

const App = () => {
  return (
    <div className="relative flex min-h-screen w-full flex-col overflow-hidden bg-[#f2f2f2] font-['Liberation_Sans',Arial,sans-serif] text-[11px] text-[#505050]">
      <header className="h-[29px] border-t border-white bg-[#6e6e6e] pl-[18px] text-white">
        <h1 className="text-[13px] leading-[22px] font-bold">Berechnung BANDBREITEN • SIM-BANDBREN00__ • BANDBREITE</h1>
      </header>
      <SectionBar title="Liste der Aufmaßblätte" indent="pl-[18px]" />
      <SheetTable />

      <div className="mt-[5px] border-t border-[#e0e0e0] pt-[6px] pl-[27px]">
        <p className="pl-1 leading-[17px]">Rechendokument</p>
        <div className="mt-1 flex gap-[38px] overflow-hidden">
          {[
            ["Positionsnummern einfügen", "Aufmaßblatt auswerten"],
            ["", ""],
            ["", ""],
            ["Datei ON B 2114 ausgeben", "Datenexport als .csv"],
          ].map((pair, i) => (
            <div key={i} className="flex w-[433px] shrink-0 flex-col gap-[2px]">
              {pair.map((p, j) => (
                <GreenButton key={j} className={i === 3 && j === 0 ? "text-[#dbe6bd]" : "text-white"}>
                  {p}
                </GreenButton>
              ))}
            </div>
          ))}
        </div>
      </div>
      <div className="h-[10px]" />
      <SectionBar title="Liste der Positionen" indent="pl-[27px]" />
      <PositionTable />

      <div className="flex h-[18px] items-center border-b border-[#969696] bg-[#ebebeb] pl-4">
        <svg viewBox="0 0 8 12" className="h-3 w-2">
          <path d="M7 1L2 6l5 5" fill="none" stroke="#505050" strokeWidth="2.500" />
        </svg>
        <span className="ml-[9px] h-4 w-3/4 bg-[#cdcdcd]" />
      </div>
      <footer className="flex h-[30px] gap-2 border-b border-[#e0e0e0] pt-[5px]">
        {[
          ["Kommentar", "Kopieren", "Einfügen"],
          ["Korrigieren", "Kopieren", "Einfügen"],
        ].map((group, i) => (
          <div key={i} className="flex w-[947px] shrink-0 pl-[17px]">
            {group.map((g) => (
              <div key={g} className="w-[310px]">
                <GreenButton className="px-[10px] text-[#dbe6bd]">{g}</GreenButton>
              </div>
            ))}
          </div>
        ))}
      </footer>
      <div className="h-2" />

      <EditorWindow />
      <SettingsDialog />
      {marks.map((m) => (
        <React.Fragment key={m.n}>
          <span className={`pointer-events-none absolute border-3 border-[#ed1c24] ${m.box}`} />
          <span className={`absolute text-base leading-5 font-bold text-[#ed1c24] ${ui_font} ${m.num}`}>{m.n}</span>
        </React.Fragment>
      ))}
    </div>
  );
};

export default App;
